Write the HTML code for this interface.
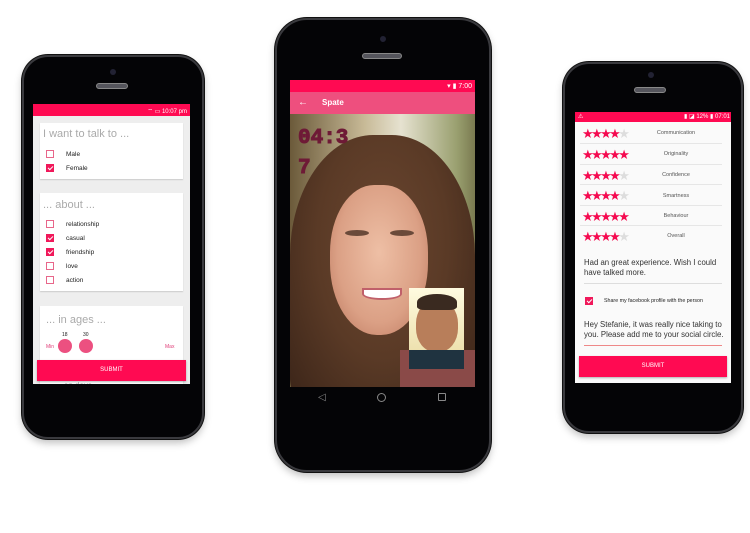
<!DOCTYPE html>
<html><head><style>
*{margin:0;padding:0;box-sizing:border-box}
body{width:750px;height:533px;background:#fff;position:relative;overflow:hidden;font-family:"Liberation Sans",sans-serif}
.abs{position:absolute}
.phone{position:absolute;background:#040406;border:2px solid #3a3a3e;box-shadow:0 0 0 1px #111,0 4px 8px rgba(0,0,0,.25)}
.cam{position:absolute;width:6px;height:6px;border-radius:50%;background:#223}
.spk{position:absolute;height:6px;border-radius:3px;background:#55555c;border:1px solid #888}
.pink{background:#ff0a52}
.cb{position:absolute;width:8px;height:8px;border:1px solid #e8668a;background:#fff}
.cb.on{background:#f0185a;border-color:#f0185a}
.cb.on:after{content:"";position:absolute;left:2px;top:0px;width:2px;height:4px;border:solid #fff;border-width:0 1px 1px 0;transform:rotate(45deg)}
.lbl{position:absolute;font-size:6.5px;color:#222}
.card{position:absolute;background:#fff;box-shadow:0 1px 1px rgba(0,0,0,.15)}
.ttl{position:absolute;color:#aaa;font-size:11px}
.st{position:absolute;font-size:13px;letter-spacing:-2.6px;color:#f50a50;line-height:1}
.st i{color:#ddd;font-style:normal}
.rl{position:absolute;font-size:5.5px;color:#555;width:80px;text-align:center;left:636px}
.sep{position:absolute;left:580px;width:142px;height:1px;background:#e6e6e6}
</style></head><body>

<!-- LEFT PHONE -->
<div class="phone" style="left:22px;top:55px;width:182px;height:384px;border-radius:26px"></div>
<div class="cam" style="left:110px;top:69px"></div>
<div class="spk" style="left:96px;top:83px;width:32px"></div>
<div class="abs" style="left:33px;top:104px;width:157px;height:280px;background:#eee;overflow:hidden">
  <div class="abs pink" style="left:0;top:0;width:157px;height:12px"></div>
  <div class="abs" style="right:3px;top:3px;font-size:6px;color:#fff">⌔ ▭ 10:07 pm</div>
  <div class="card" style="left:7px;top:19px;width:143px;height:56px"></div>
  <div class="ttl" style="left:10px;top:24px">I want to talk to ...</div>
  <div class="cb" style="left:13px;top:46px"></div><div class="lbl" style="left:33px;top:47px">Male</div>
  <div class="cb on" style="left:13px;top:60px"></div><div class="lbl" style="left:33px;top:61px">Female</div>
  <div class="card" style="left:7px;top:89px;width:143px;height:98px"></div>
  <div class="ttl" style="left:10px;top:95px">... about ...</div>
  <div class="cb" style="left:13px;top:116px"></div><div class="lbl" style="left:33px;top:117px">relationship</div>
  <div class="cb on" style="left:13px;top:130px"></div><div class="lbl" style="left:33px;top:131px">casual</div>
  <div class="cb on" style="left:13px;top:144px"></div><div class="lbl" style="left:33px;top:145px">friendship</div>
  <div class="cb" style="left:13px;top:158px"></div><div class="lbl" style="left:33px;top:159px">love</div>
  <div class="cb" style="left:13px;top:172px"></div><div class="lbl" style="left:33px;top:173px">action</div>
  <div class="card" style="left:7px;top:202px;width:143px;height:80px"></div>
  <div class="ttl" style="left:13px;top:210px">... in ages ...</div>
  <div class="lbl" style="left:29px;top:228px;font-size:5px">18</div>
  <div class="lbl" style="left:50px;top:228px;font-size:5px">30</div>
  <div class="lbl" style="left:13px;top:240px;font-size:5px;color:#e0407a">Min</div>
  <div class="lbl" style="left:132px;top:240px;font-size:5px;color:#e0407a">Max</div>
  <div class="abs" style="left:25px;top:235px;width:14px;height:14px;border-radius:50%;background:#ec5080"></div>
  <div class="abs" style="left:46px;top:235px;width:14px;height:14px;border-radius:50%;background:#ec5080"></div>
  <div class="abs pink" style="left:4px;top:256px;width:149px;height:21px;box-shadow:0 1px 2px rgba(0,0,0,.3);color:#fff;font-size:6px;text-align:center;line-height:21px">SUBMIT</div>
  <div class="abs" style="left:22px;top:277px;font-size:8px;color:#999">... on days</div>
</div>

<!-- MIDDLE PHONE -->
<div class="phone" style="left:275px;top:18px;width:216px;height:454px;border-radius:32px"></div>
<div class="cam" style="left:380px;top:36px"></div>
<div class="spk" style="left:362px;top:53px;width:40px"></div>
<div class="abs" style="left:290px;top:80px;width:185px;height:307px;overflow:hidden">
  <div class="abs pink" style="left:0;top:0;width:185px;height:12px"></div>
  <div class="abs" style="right:3px;top:2px;font-size:7px;color:#fff">▾ ▮ 7:00</div>
  <div class="abs" style="left:0;top:12px;width:185px;height:22px;background:#ee4f7e"></div>
  <div class="abs" style="left:8px;top:17px;font-size:10px;color:#fff">←</div>
  <div class="abs" style="left:32px;top:18px;font-size:8px;color:#fff;font-weight:bold">Spate</div>
  <div class="abs" style="left:0;top:34px;width:185px;height:273px;background:linear-gradient(90deg,#6b5a3a 0%,#c7b996 40%,#e6e2d0 60%,#9aa070 90%,#7a7a50 100%)"></div>
  <div class="abs" style="left:0px;top:55px;width:185px;height:270px;border-radius:45% 45% 10% 10%;background:radial-gradient(ellipse at 50% 40%,#6a4630 0%,#5a3a26 50%,#3a2418 100%)"></div>
  <div class="abs" style="left:40px;top:105px;width:98px;height:150px;border-radius:45% 45% 48% 48%;background:radial-gradient(ellipse at 50% 45%,#eebfa5 0%,#dba085 60%,#b8735a 100%)"></div>
  <div class="abs" style="left:55px;top:150px;width:24px;height:6px;border-radius:50%;background:#6a4a3a"></div>
  <div class="abs" style="left:100px;top:150px;width:24px;height:6px;border-radius:50%;background:#6a4a3a"></div>
  <div class="abs" style="left:72px;top:208px;width:40px;height:12px;border-radius:0 0 50% 50%;background:#fff;border:2px solid #c0606a"></div>
  <div class="abs" style="left:110px;top:270px;width:75px;height:37px;background:#8a4a48"></div>
  <div class="abs" style="left:8px;top:44px;font-family:'Liberation Mono',monospace;font-weight:bold;font-size:21px;line-height:30px;color:#6e1a36;-webkit-text-stroke:1px #6e1a36">04:3<br>7</div>
  <div class="abs" style="left:119px;top:208px;width:55px;height:81px;background:linear-gradient(#fffbe0,#e8d9a0)"></div>
  <div class="abs" style="left:126px;top:220px;width:42px;height:52px;border-radius:45%;background:#b87e5a"></div>
  <div class="abs" style="left:127px;top:214px;width:40px;height:16px;border-radius:50% 50% 20% 20%;background:#3a2a20"></div>
  <div class="abs" style="left:119px;top:270px;width:55px;height:19px;background:#1f3340"></div>
</div>
<div class="abs" style="left:318px;top:392px;color:#888;font-size:10px">◁</div>
<div class="abs" style="left:377px;top:393px;width:9px;height:9px;border:1.5px solid #888;border-radius:50%"></div>
<div class="abs" style="left:438px;top:393px;width:8px;height:8px;border:1.5px solid #888;border-radius:1px"></div>

<!-- RIGHT PHONE -->
<div class="phone" style="left:563px;top:62px;width:180px;height:371px;border-radius:26px"></div>
<div class="cam" style="left:648px;top:72px"></div>
<div class="spk" style="left:634px;top:87px;width:32px"></div>
<div class="abs" style="left:575px;top:112px;width:156px;height:271px;background:#fafafa"></div>
<div class="abs pink" style="left:575px;top:112px;width:156px;height:10px"></div>
<div class="abs" style="left:578px;top:113px;font-size:6px;color:#fff">⚠</div>
<div class="abs" style="right:20px;top:113px;font-size:6px;color:#fff">▮ ◪ 12% ▮ 07:01</div>
<div class="st" style="left:582px;top:127px">★★★★<i>★</i></div><div class="rl" style="top:130px">Communication</div>
<div class="sep" style="top:143px"></div>
<div class="st" style="left:582px;top:148px">★★★★★</div><div class="rl" style="top:151px">Originality</div>
<div class="sep" style="top:164px"></div>
<div class="st" style="left:582px;top:169px">★★★★<i>★</i></div><div class="rl" style="top:172px">Confidence</div>
<div class="sep" style="top:184px"></div>
<div class="st" style="left:582px;top:189px">★★★★<i>★</i></div><div class="rl" style="top:193px">Smartness</div>
<div class="sep" style="top:205px"></div>
<div class="st" style="left:582px;top:210px">★★★★★</div><div class="rl" style="top:213px">Behaviour</div>
<div class="sep" style="top:225px"></div>
<div class="st" style="left:582px;top:230px">★★★★<i>★</i></div><div class="rl" style="top:233px">Overall</div>
<div class="abs" style="left:584px;top:258px;font-size:7.8px;line-height:9.5px;color:#333;width:145px">Had an great experience. Wish I could have talked more.</div>
<div class="abs" style="left:584px;top:283px;width:138px;height:1px;background:#ddd"></div>
<div class="cb on" style="left:585px;top:297px"></div>
<div class="abs" style="left:604px;top:298px;font-size:5.3px;color:#222">Share my facebook profile with the person</div>
<div class="abs" style="left:584px;top:320px;font-size:7.8px;line-height:9.5px;color:#333;width:145px">Hey Stefanie, it was really nice taking to you. Please add me to your social circle.</div>
<div class="abs" style="left:584px;top:345px;width:138px;height:1px;background:#e88"></div>
<div class="abs pink" style="left:579px;top:356px;width:148px;height:21px;box-shadow:0 1px 2px rgba(0,0,0,.3);color:#fff;font-size:6px;text-align:center;line-height:21px">SUBMIT</div>
</body></html>
